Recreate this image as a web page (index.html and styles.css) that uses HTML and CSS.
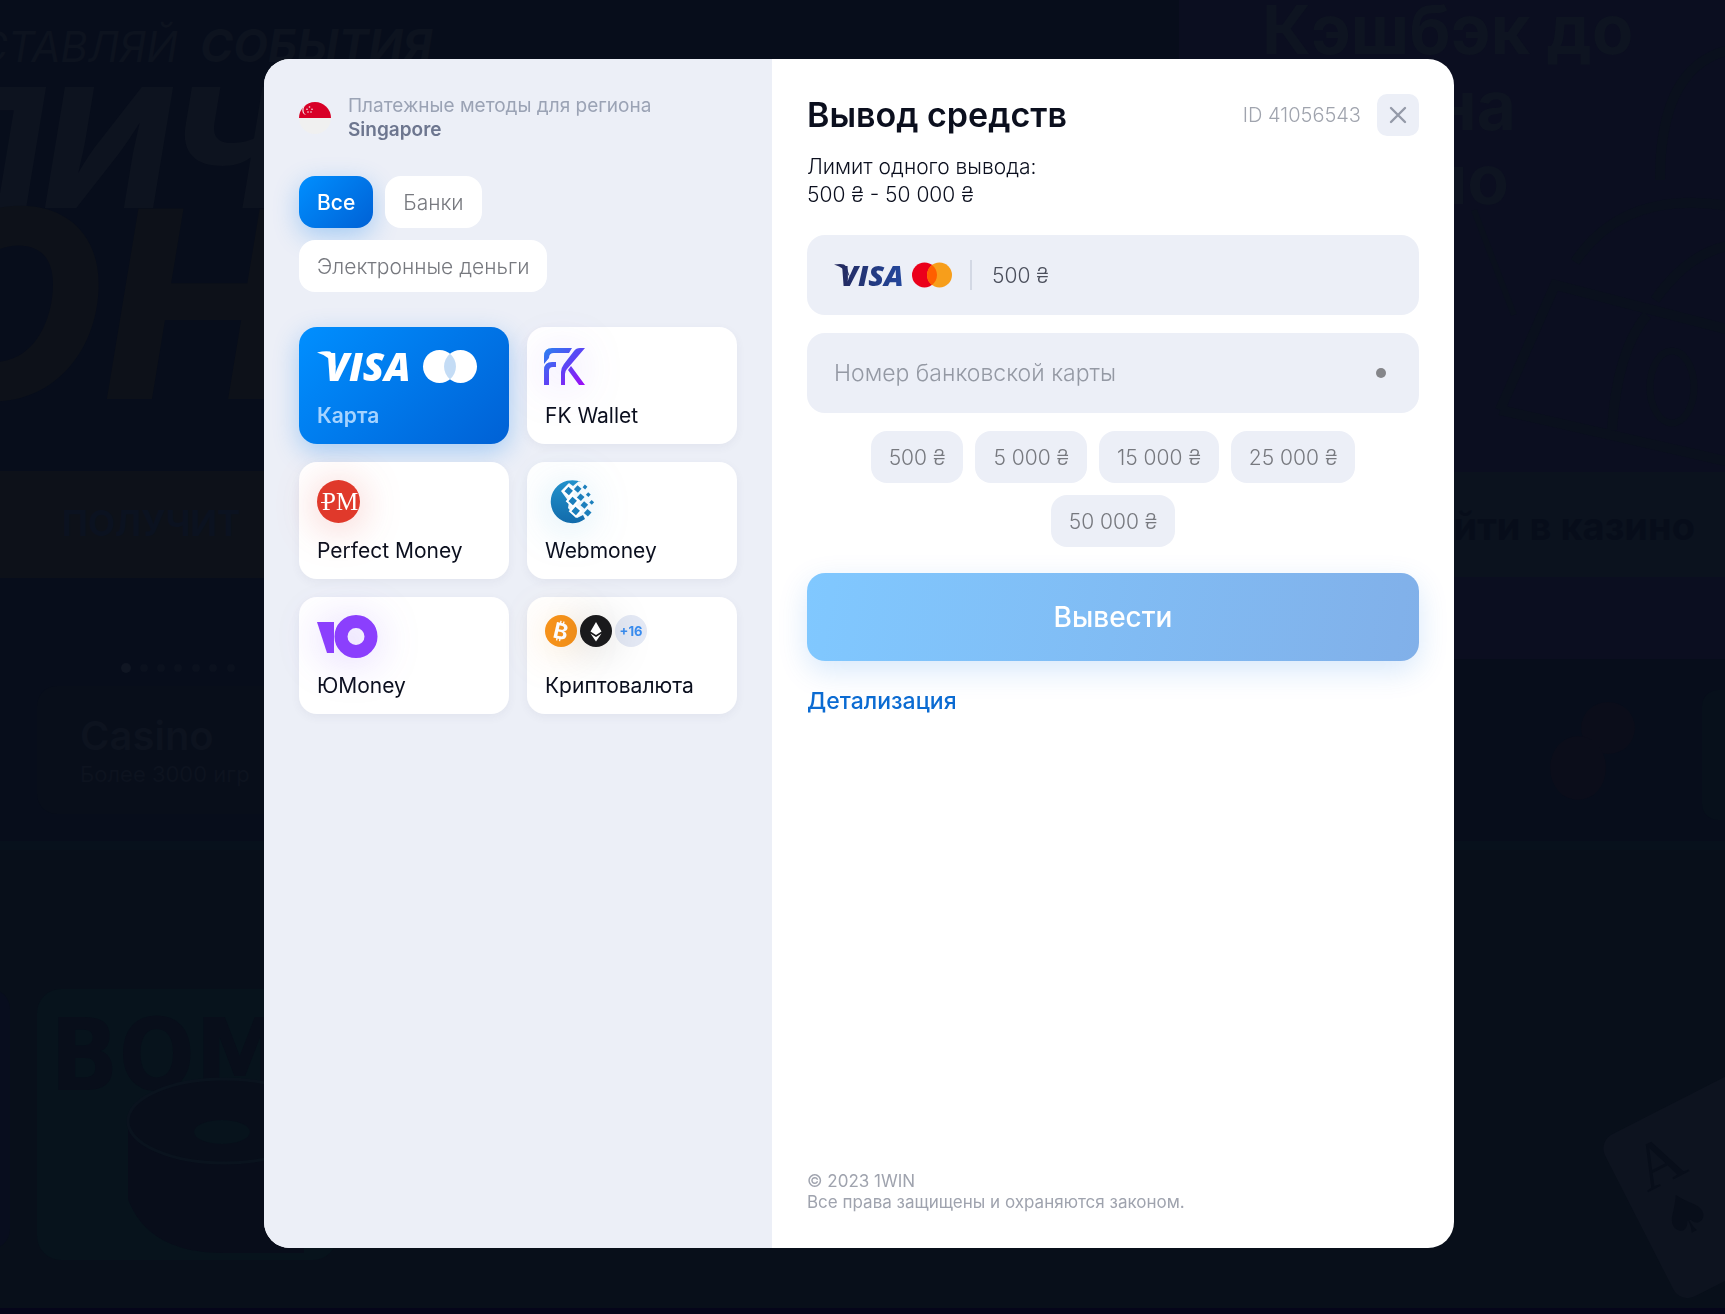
FILE: index.html
```html
<!DOCTYPE html>
<html lang="ru">
<head>
    <meta charset="UTF-8">
    <meta name="viewport" content="width=device-width, initial-scale=1.0">
    <title>Вывод средств</title>
    <link rel="stylesheet" href="styles.css">
</head>
<body>
    <!-- dimmed page behind the modal -->
    <svg class="backdrop" viewBox="0 0 1725 1314" preserveAspectRatio="xMinYMin slice" aria-hidden="true">
        <rect width="1725" height="1314" fill="#070d1b"/>
        <rect y="845" width="1725" height="469" fill="#080f1a"/>
        <rect y="841" width="1725" height="9" fill="#07111c"/>
        <g font-style="italic" fill="#0d131f">
            <text x="178" y="62" font-size="42" text-anchor="end">СТАВЛЯЙ</text>
            <text x="200" y="62" font-size="45" font-weight="700">СОБЫТИЯ</text>
            <text x="288" y="208" font-size="166" font-weight="800" text-anchor="end">ЛИЧ</text>
            <text x="300" y="399" font-size="262" font-weight="800" text-anchor="end" fill="#0d1119">ОН</text>
        </g>
        <rect y="471" width="600" height="107" fill="#0d1119"/>
        <text x="62" y="536" font-size="35" font-weight="700" fill="#0b1220">ПОЛУЧИТ</text>
        <g fill="#0b111e">
            <circle cx="126" cy="668" r="5" fill="#101623"/>
            <circle cx="144" cy="668" r="4"/>
            <circle cx="161" cy="668" r="4"/>
            <circle cx="178" cy="668" r="4"/>
            <circle cx="196" cy="668" r="4"/>
            <circle cx="213" cy="668" r="4"/>
            <circle cx="231" cy="668" r="4"/>
        </g>
        <rect x="37" y="686" width="400" height="128" rx="20" fill="#080e1a"/>
        <g fill="#0d131f">
            <text x="80" y="750" font-size="40" font-weight="600">Casino</text>
            <text x="80" y="782" font-size="22">Более 3000 игр</text>
        </g>
        <rect x="-40" y="989" width="50" height="260" rx="20" fill="#080d1e"/>
        <rect x="37" y="989" width="300" height="271" rx="24" fill="#07131c"/>
        <text class="tall" x="50" y="1090" font-size="100" font-weight="700" fill="#080e1a">BOMBU</text>
        <path d="M128 1124v75q20 54 96 54h80v-150z" fill="#080d1a"/>
        <ellipse cx="224" cy="1121" rx="96" ry="42" fill="#080e1a" stroke="#0a131e" stroke-width="3"/>
        <ellipse cx="222" cy="1132" rx="28" ry="12" fill="#07131c"/>

        <rect x="1179" width="546" height="659" fill="#0b0e20"/>
        <g fill="none" stroke="#0a101d" stroke-width="10">
            <path d="M1660 180q0-115 70-130M1575 262q50-75 160-55M1655 300q35-50 80-55"/>
            <path d="M1500 410l55-125 175 45M1500 410l230 52M1612 430q5-80 35-115"/>
            <path d="M1474 210l40 105" stroke-width="6"/>
            <ellipse cx="1672" cy="387" rx="22" ry="36" stroke-width="7"/>
        </g>
        <g fill="#0e1421" font-weight="700" font-size="68">
            <text x="1262" y="54">Кэшбэк до</text>
            <text x="1516" y="130" text-anchor="end">30% на</text>
            <text x="1509" y="204" text-anchor="end">казино</text>
        </g>
        <rect x="1179" y="472" width="546" height="105" fill="#0b121e"/>
        <text x="1695" y="540" font-size="38" font-weight="700" text-anchor="end" fill="#070d1a">Перейти в казино</text>
        <g fill="#0b0d1a">
            <ellipse cx="1608" cy="728" rx="27" ry="26"/>
            <ellipse cx="1578" cy="768" rx="28" ry="32"/>
        </g>
        <rect x="1702" y="690" width="60" height="130" rx="16" fill="#07101b"/>
        <g transform="rotate(-27 1602 1145)">
            <rect x="1600" y="1140" width="220" height="182" rx="16" fill="#0d131f"/>
            <text class="serif" x="1621" y="1208" font-size="66" fill="#080e1a">A</text>
            <text class="suit" x="1620" y="1264" font-size="56" fill="#080e1a">♠</text>
        </g>
        <rect y="1308" width="1725" height="6" fill="#05051a"/>
    </svg>

    <div class="overlay">
        <div class="modal" role="dialog" aria-labelledby="title">
            <aside class="methods">
                <div class="region">
                    <svg class="flag" viewBox="0 0 32 32" aria-hidden="true">
                        <circle cx="16" cy="16" r="16" fill="#f0f0f0"/>
                        <path d="M0 16a16 16 0 0 1 32 0z" fill="#d80027"/>
                        <path d="M7.500 2.800a5.200 5.200 0 0 0 0 10.200q-3-1.400-3-5.100t3-5.100z" fill="#f0f0f0"/>
                        <g fill="#f0f0f0">
                            <circle cx="10.500" cy="5" r=".8"/>
                            <circle cx="8" cy="7.200" r=".8"/>
                            <circle cx="13" cy="7.200" r=".8"/>
                            <circle cx="9" cy="10" r=".8"/>
                            <circle cx="12" cy="10" r=".8"/>
                        </g>
                    </svg>
                    <div class="region-text">
                        Платежные методы для региона
                        <strong>Singapore</strong>
                    </div>
                </div>

                <div class="filters">
                    <button type="button" class="chip active">Все</button>
                    <button type="button" class="chip">Банки</button>
                    <button type="button" class="chip">Электронные деньги</button>
                </div>

                <div class="method-list">
                    <button type="button" class="method active">
                        <svg width="162" height="44" viewBox="0 0 162 44" aria-hidden="true">
                            <path d="M0 7.500q8-2 13-1 2 1 3 5l3 12q-5-12-19-16z" fill="#fff"/>
                            <text class="visa" x="8" y="36" font-size="39" fill="#fff">VISA</text>
                            <circle cx="122.500" cy="21.500" r="16.500" fill="#fff"/>
                            <circle cx="143.500" cy="21.500" r="16.500" fill="#fff"/>
                            <path d="M133 8.800a16.500 16.500 0 0 1 0 25.400a16.500 16.500 0 0 1 0-25.400z" fill="#c4dcf5"/>
                        </svg>
                        <span>Карта</span>
                    </button>

                    <button type="button" class="method">
                        <svg class="glow-violet" width="44" height="44" viewBox="0 0 44 44" aria-hidden="true">
                            <defs>
                                <linearGradient id="fk" x1="0" y1="0" x2="1" y2="1">
                                    <stop offset="0" stop-color="#2a82f0"/>
                                    <stop offset=".5" stop-color="#5b45f5"/>
                                    <stop offset="1" stop-color="#a00af5"/>
                                </linearGradient>
                            </defs>
                            <path d="M-1 19v-8q0-8 8-8h20l-3 5H9q-5 0-5 5l-5 6zM-1 40V25q0-8 8-8h4v5H8q-4 0-4 4v14zM16 40V27q0-4 3-8L29 6q2-3 6-3h5L22 24q-2 2-2 5v11zM23 25l3-4 14 19h-6z" fill="url(#fk)"/>
                        </svg>
                        <span>FK Wallet</span>
                    </button>

                    <button type="button" class="method">
                        <svg class="glow-red" width="44" height="44" viewBox="0 0 44 44" aria-hidden="true">
                            <circle cx="21.500" cy="21.500" r="21.500" fill="#e0392b"/>
                            <text class="serif" x="5" y="30" font-size="25" fill="#fff">PM</text>
                            <path d="M4 22.500h7" stroke="#fff" stroke-width="1"/>
                        </svg>
                        <span>Perfect Money</span>
                    </button>

                    <button type="button" class="method">
                        <svg class="glow-blue" width="50" height="44" viewBox="-5 0 50 44" aria-hidden="true">
                            <defs>
                                <linearGradient id="wm" x1="0" y1="0" x2="0" y2="1">
                                    <stop offset="0" stop-color="#2292cc"/>
                                    <stop offset="1" stop-color="#126bab"/>
                                </linearGradient>
                            </defs>
                            <path d="M32 2.500A21.500 21.500 0 1 0 35 39l-2-4-6 3-9-10 1-6-8-11 8-8 4 3 6-5z" fill="url(#wm)"/>
                            <g fill="#1b7fbc" stroke="#fff" stroke-width="2">
                                <rect x="14.700" y="7" width="8" height="8" transform="rotate(42 18.700 11)"/>
                                <rect x="18.700" y="17" width="8" height="8" transform="rotate(42 22.700 21)"/>
                                <rect x="21.700" y="27" width="8" height="8" transform="rotate(42 25.700 31)"/>
                            </g>
                            <g fill="#1b7fbc">
                                <rect x="25" y="6.300" width="5.400" height="5.400" transform="rotate(42 27.700 9)"/>
                                <rect x="28" y="14.600" width="5.400" height="5.400" transform="rotate(42 30.700 17.300)"/>
                                <rect x="31.600" y="22.300" width="5.400" height="5.400" transform="rotate(42 34.300 25)"/>
                                <rect x="35" y="30" width="5.400" height="5.400" transform="rotate(42 37.700 32.700)"/>
                                <rect x="33.300" y="5.300" width="3.400" height="3.400" transform="rotate(42 35 7)"/>
                                <rect x="36.600" y="13" width="3.400" height="3.400" transform="rotate(42 38.300 14.700)"/>
                                <rect x="40" y="20.600" width="3.400" height="3.400" transform="rotate(42 41.700 22.300)"/>
                            </g>
                        </svg>
                        <span>Webmoney</span>
                    </button>

                    <button type="button" class="method">
                        <svg class="glow-violet" width="62" height="44" viewBox="0 0 62 44" aria-hidden="true">
                            <path d="M0 7h17v31h-7z" fill="#8b3ffd"/>
                            <circle cx="39" cy="21.500" r="15" fill="none" stroke="#8b3ffd" stroke-width="13"/>
                        </svg>
                        <span>ЮMoney</span>
                    </button>

                    <button type="button" class="method">
                        <span class="coins">
                            <svg class="glow-orange" width="32" height="32" viewBox="0 0 32 32" aria-hidden="true">
                                <circle cx="16" cy="16" r="16" fill="#f7931a"/>
                                <text x="16" y="24" font-size="22" font-weight="700" text-anchor="middle" fill="#fff" transform="rotate(13 16 16)">₿</text>
                            </svg>
                            <svg class="glow-dark" width="32" height="32" viewBox="0 0 32 32" aria-hidden="true">
                                <circle cx="16" cy="16" r="16" fill="#1a1a1c"/>
                                <path d="M16 7l5.500 9.500-5.500 3.500-5.500-3.500zM10.500 18.500l5.500 3.500 5.500-3.500-5.500 8z" fill="#fff"/>
                            </svg>
                            <span class="more">+16</span>
                        </span>
                        <span>Криптовалюта</span>
                    </button>
                </div>
            </aside>

            <main class="withdraw">
                <header class="head">
                    <h1 id="title">Вывод средств</h1>
                    <span class="user-id">ID 41056543</span>
                    <button type="button" class="close" aria-label="Закрыть">
                        <svg width="18" height="18" viewBox="0 0 18 18" aria-hidden="true">
                            <path d="M2 2l14 14M16 2L2 16" stroke="#949aa8" stroke-width="2.400" stroke-linecap="round"/>
                        </svg>
                    </button>
                </header>

                <p class="limit">Лимит одного вывода:<br>500 ₴ - 50 000 ₴</p>

                <form>
                    <div class="field">
                        <svg width="118" height="28" viewBox="0 0 118 28" aria-hidden="true">
                            <defs>
                                <linearGradient id="visa" x1="0" y1="0" x2="1" y2="0">
                                    <stop offset="0" stop-color="#232a60"/>
                                    <stop offset="1" stop-color="#24489e"/>
                                </linearGradient>
                            </defs>
                            <path d="M0 3.500q7-1 10 0 2 1 3 4l3 9q-5-10-16-13z" fill="#232a60"/>
                            <text class="visa" x="6" y="25" font-size="29" fill="url(#visa)">VISA</text>
                            <circle cx="90.500" cy="14" r="12.500" fill="#eb001b"/>
                            <circle cx="105.500" cy="14" r="12.500" fill="#f79e1b"/>
                            <path d="M98 4a12.500 12.500 0 0 1 0 20a12.500 12.500 0 0 1 0-20z" fill="#ff5f00"/>
                        </svg>
                        <label class="sr-only" for="amount">Сумма</label>
                        <input class="amount" type="text" id="amount" value="500 ₴">
                    </div>
                    <div class="field">
                        <label class="sr-only" for="card">Номер банковской карты</label>
                        <input type="text" id="card" placeholder="Номер банковской карты">
                        <span class="dot"></span>
                    </div>

                    <div class="sums">
                        <button type="button" class="chip">500 ₴</button>
                        <button type="button" class="chip">5 000 ₴</button>
                        <button type="button" class="chip">15 000 ₴</button>
                        <button type="button" class="chip">25 000 ₴</button>
                        <button type="button" class="chip">50 000 ₴</button>
                    </div>

                    <button type="submit" class="submit">Вывести</button>
                </form>

                <a class="details" href="#">Детализация</a>

                <footer>© 2023 1WIN<br>Все права защищены и охраняются законом.</footer>
            </main>
        </div>
    </div>
</body>
</html>
```
FILE: styles.css
```css
* {
    box-sizing: border-box;
}
body {
    margin: 0;
    font-family: Inter, "Liberation Sans", sans-serif;
    font-size: 21px;
    color: #0b0f1e;
    background: #070d1b;
}
button, input {
    font: inherit;
    border: none;
    padding: 0;
}
button {
    cursor: pointer;
}
.backdrop {
    position: fixed;
    top: 0;
    left: 0;
    width: 100%;
    height: 100%;
}
.serif {
    font-family: "Liberation Serif", serif;
}
.suit {
    font-family: "DejaVu Sans", sans-serif;
}
.tall {
    font-family: "DejaVu Sans Condensed", "DejaVu Sans", sans-serif;
}
.visa {
    font-family: "Open Sans", sans-serif;
    font-weight: 800;
    font-style: italic;
}
.overlay {
    position: relative;
    display: flex;
    justify-content: center;
    min-height: 100vh;
    padding: 59px 7px 66px 0;
}
.modal {
    display: flex;
    width: 100%;
    max-width: 1190px;
    background: #fff;
    border-radius: 26px;
    overflow: hidden;
}

/* left column */
.methods {
    width: 508px;
    padding: 35px;
    background: #eceff7;
}
.region {
    display: flex;
    align-items: center;
    gap: 17px;
    line-height: 24px;
    color: #9ba3b5;
    font-size: 19px;
}
.region strong {
    display: block;
    font-weight: 600;
    color: #6d768f;
}
.flag {
    width: 32px;
    height: 32px;
}
.filters, .sums {
    display: flex;
    flex-wrap: wrap;
    gap: 12px;
}
.filters {
    margin: 34px 0 35px;
}
.chip {
    height: 52px;
    padding: 0 18px;
    border-radius: 16px;
    background: #fff;
    color: #77797f;
    font-weight: 300;
}
.chip.active {
    background: linear-gradient(135deg, #008fff, #0061d5);
    color: #fff;
    font-weight: 500;
    box-shadow: 0 8px 26px rgba(0, 122, 240, 0.3);
}
.method-list {
    display: grid;
    grid-template-columns: 1fr 1fr;
    gap: 18px;
}
.method {
    display: flex;
    flex-direction: column;
    align-items: flex-start;
    justify-content: space-between;
    height: 117px;
    padding: 18px 17px 16px 18px;
    border-radius: 18px;
    background: #fff;
    color: #0b0f1e;
    line-height: 24px;
    box-shadow: 0 3px 10px rgba(60, 70, 100, 0.06);
}
.method.active {
    background: linear-gradient(135deg, #008fff, #0061d5);
    color: #a5d3ff;
    font-weight: 600;
    box-shadow: 0 8px 26px rgba(0, 122, 240, 0.3);
}
.method svg {
    display: block;
    overflow: visible;
}
.glow-violet {
    filter: drop-shadow(0 4px 20px rgba(120, 60, 250, 0.25));
}
.glow-red {
    filter: drop-shadow(0 4px 20px rgba(224, 57, 43, 0.3));
}
.glow-blue {
    filter: drop-shadow(0 4px 20px rgba(30, 150, 210, 0.25));
}
.glow-orange {
    filter: drop-shadow(0 4px 20px rgba(247, 147, 26, 0.25));
}
.glow-dark {
    filter: drop-shadow(0 4px 20px rgba(0, 0, 0, 0.2));
}
.coins {
    display: flex;
    gap: 3px;
}
.more {
    width: 32px;
    border-radius: 50%;
    background: #e4e9f5;
    color: #3a8df0;
    font-size: 13px;
    font-weight: 700;
    line-height: 32px;
    text-align: center;
}

/* right column */
.withdraw {
    flex: 1;
    display: flex;
    flex-direction: column;
    align-items: flex-start;
    padding: 35px;
}
.head {
    display: flex;
    align-items: center;
    width: 100%;
}
h1 {
    flex: 1;
    margin: 0;
    font-size: 34px;
    line-height: 42px;
    font-weight: 600;
}
.user-id {
    margin-right: 16px;
    color: #a0a4ae;
    font-size: 20px;
    font-weight: 300;
}
.close {
    display: flex;
    align-items: center;
    justify-content: center;
    width: 42px;
    height: 42px;
    border-radius: 10px;
    background: #eceff7;
}
.limit {
    margin: 17px 0 26px;
    line-height: 28px;
    font-weight: 300;
}
form {
    width: 100%;
}
.field {
    display: flex;
    align-items: center;
    height: 80px;
    margin-bottom: 18px;
    padding: 0 27px;
    border-radius: 18px;
    background: #eceff7;
}
.field input {
    flex: 1;
    min-width: 0;
    height: 30px;
    background: none;
    color: #4b4f5c;
    outline: none;
    font-weight: 300;
}
.field .amount {
    margin-left: 18px;
    padding-left: 20px;
    border-left: 2px solid #d3d8e4;
}
#card {
    font-size: 23px;
}
#card::placeholder {
    color: #9499a4;
    opacity: 1;
}
.dot {
    width: 10px;
    height: 10px;
    margin-right: 6px;
    border-radius: 50%;
    background: #85868a;
}
.sums {
    justify-content: center;
    padding: 0 40px;
}
.sums .chip {
    background: #eceff7;
}
.submit {
    display: block;
    width: 100%;
    height: 88px;
    margin: 26px 0;
    border-radius: 18px;
    background: linear-gradient(100deg, #80c8ff, #81b0e9);
    color: #fff;
    font-size: 28px;
    font-weight: 500;
    box-shadow: 0 10px 30px rgba(0, 110, 230, 0.16);
}
.details {
    color: #0b6bd2;
    font-size: 23px;
    line-height: 28px;
    font-weight: 500;
    text-decoration: none;
}
footer {
    margin-top: auto;
    color: #9fa3ae;
    font-size: 17px;
    line-height: 21px;
}
.sr-only {
    position: absolute;
    width: 1px;
    height: 1px;
    overflow: hidden;
    clip-path: inset(50%);
}
```
